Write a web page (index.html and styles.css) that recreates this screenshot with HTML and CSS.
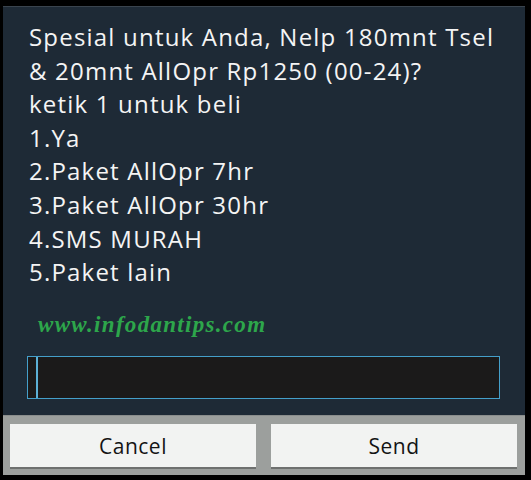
FILE: index.html
```html
<!DOCTYPE html>
<html>
<head>
<meta charset="utf-8">
<link rel="stylesheet" href="styles.css">
</head>
<body>
<div class="dialog">
  <div class="content">
    <div class="message">
      <div class="line">Spesial untuk Anda, Nelp 180mnt Tsel</div>
      <div class="line">&amp; 20mnt AllOpr Rp1250 (00-24)?</div>
      <div class="line">ketik 1 untuk beli</div>
      <div class="line">1.Ya</div>
      <div class="line">2.Paket AllOpr 7hr</div>
      <div class="line">3.Paket AllOpr 30hr</div>
      <div class="line">4.SMS MURAH</div>
      <div class="line">5.Paket lain</div>
    </div>
    <div class="watermark">www.infodantips.com</div>
    <div class="input"><span class="cursor"></span></div>
  </div>
  <div class="buttons">
    <div class="btn">Cancel</div>
    <div class="btn">Send</div>
  </div>
</div>
</body>
</html>
```
FILE: styles.css
```css
html, body {
  margin: 0;
  padding: 0;
  background: #000;
}
body {
  width: 531px;
  height: 480px;
  overflow: hidden;
}
.dialog {
  margin: 6px 0 0 3px;
  width: 522px;
  height: 469px;
  display: flex;
  flex-direction: column;
  background: #1e2a36;
  box-shadow: inset 0 1px 0 #3a444e;
}
.content {
  height: 409px;
  display: flex;
  flex-direction: column;
  padding: 0 0 0 24px;
  box-sizing: border-box;
}
.message {
  padding: 14px 0 0 2px;
  font-family: "Open Sans", "Noto Sans", sans-serif;
  font-size: 24px;
  line-height: 33.6px;
  letter-spacing: 1.2px;
  color: #f4f4f4;
}
.line {
  white-space: nowrap;
}
.watermark {
  margin: 21px 0 0 11px;
  font-family: "Liberation Serif", serif;
  font-style: italic;
  font-weight: bold;
  font-size: 23px;
  line-height: 30px;
  letter-spacing: 1.3px;
  color: #2da64b;
}
.input {
  margin-top: 16px;
  width: 473px;
  height: 43px;
  box-sizing: border-box;
  border: 1.5px solid #449fca;
  background: #1b1a1a;
  display: flex;
  padding-left: 8px;
}
.cursor {
  width: 2px;
  background: #5cb0d6;
}
.buttons {
  flex: 1;
  display: flex;
  gap: 15px;
  padding: 8px 8px 8px 7px;
  background: #9c9f9d;
  border-top: 1px solid #8a8d8c;
}
.btn {
  flex: 1;
  background: #f2f3f2;
  box-shadow: 0 2px 0 #6e706f;
  display: flex;
  align-items: center;
  justify-content: center;
  font-family: "Open Sans", "Noto Sans", sans-serif;
  font-size: 21px;
  letter-spacing: 0.5px;
  color: #141414;
}
```
